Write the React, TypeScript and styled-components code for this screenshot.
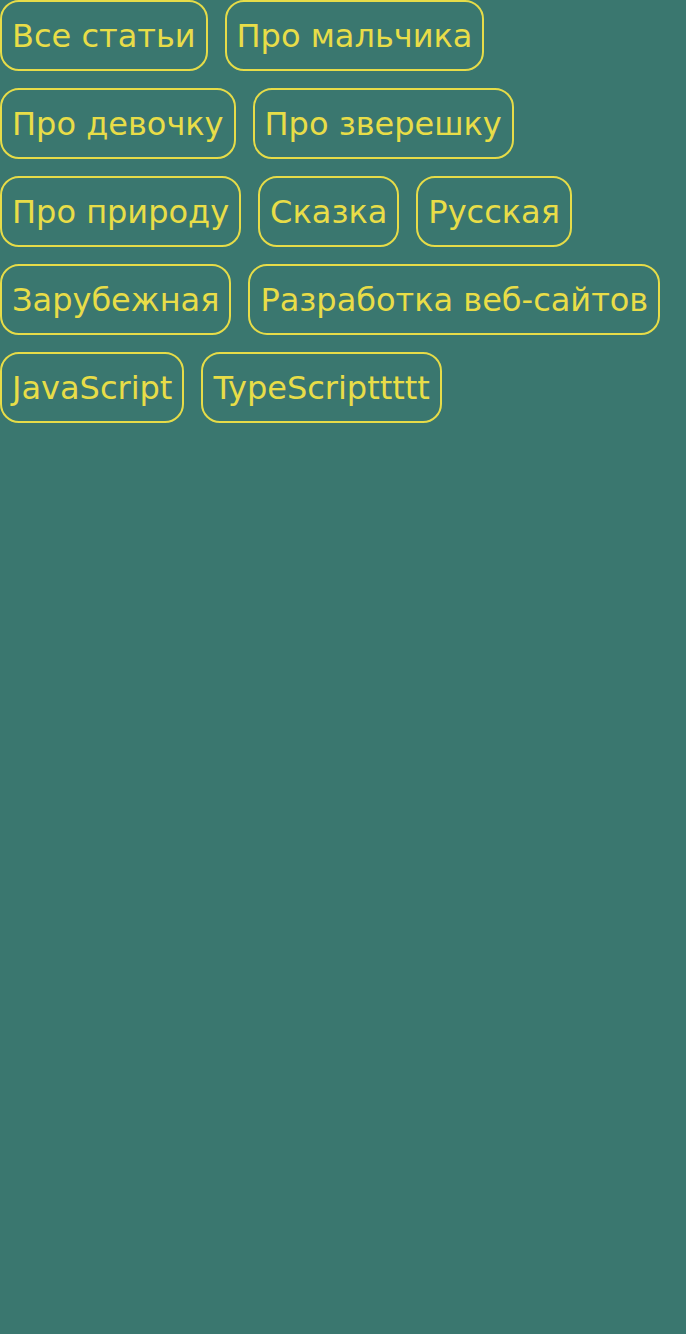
import React from 'react'
import styled, { createGlobalStyle } from 'styled-components'

const GlobalStyle = createGlobalStyle`
  html, body {
    margin: 0;
    padding: 0;
    background: #3a776f;
  }
  body {
    min-height: 100vh;
    font-family: 'DejaVu Sans', 'Noto Sans', sans-serif;
  }
`

const categories = [
  'Все статьи',
  'Про мальчика',
  'Про девочку',
  'Про зверешку',
  'Про природу',
  'Сказка',
  'Русская',
  'Зарубежная',
  'Разработка веб-сайтов',
  'JavaScript',
  'TypeScripttttt',
]

const App = () => {
  return (
    <>
      <GlobalStyle />
      <Wrapper>
        {categories.map(title => (
          <Tag key={title} type='button'>
            {title}
          </Tag>
        ))}
      </Wrapper>
    </>
  )
}

const Wrapper = styled.nav`
  display: flex;
  flex-wrap: wrap;
  column-gap: 17px;
  row-gap: 17px;
  width: 686px;
`

const Tag = styled.button`
  display: inline-flex;
  align-items: center;
  justify-content: center;
  box-sizing: border-box;
  height: 71px;
  padding: 0 10px;
  border: 2px solid #e6dc48;
  border-radius: 19px;
  background: transparent;
  color: #e8dd48;
  font-family: 'DejaVu Sans', 'Noto Sans', sans-serif;
  font-size: 32px;
  font-weight: 400;
  white-space: nowrap;
  cursor: pointer;
`

export default App
